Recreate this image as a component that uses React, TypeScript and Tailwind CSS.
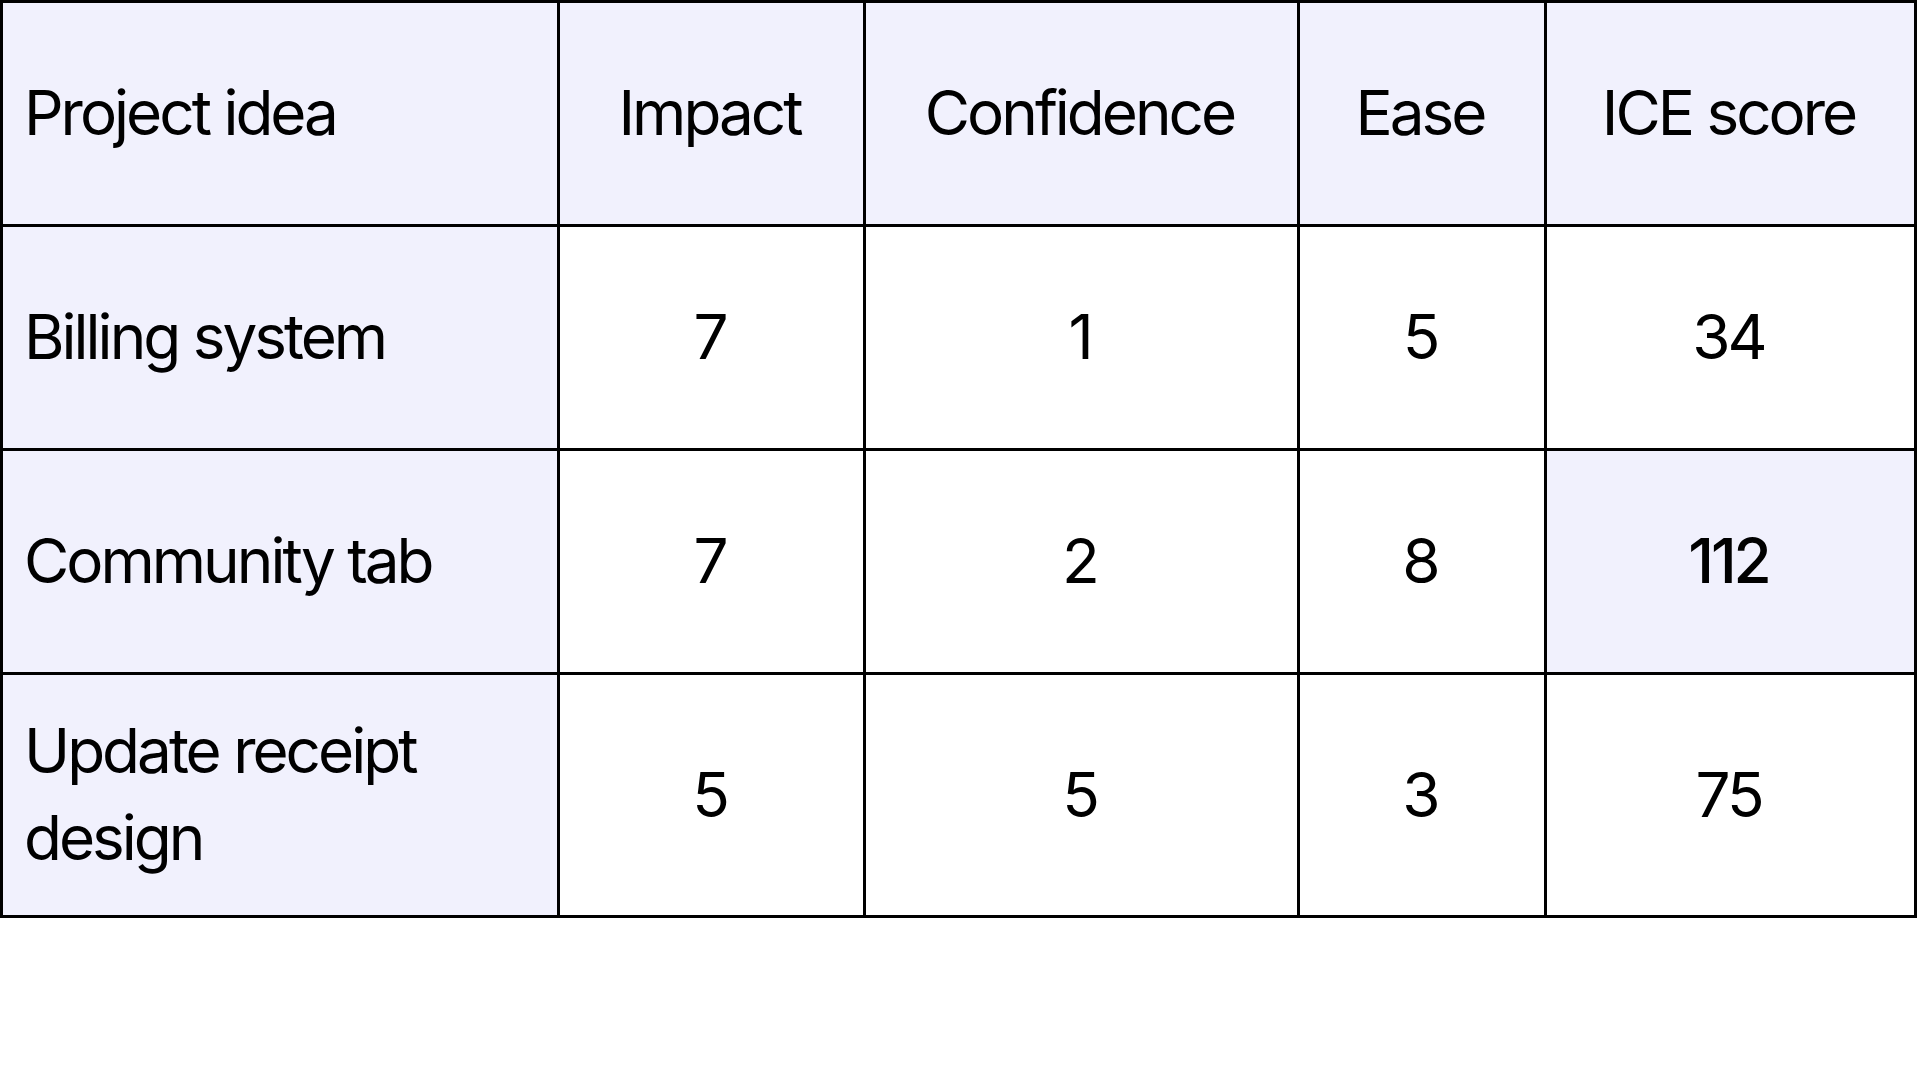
import React from "react";

const header = ["Project idea", "Impact", "Confidence", "Ease", "ICE score"];
const rows: { name: string; vals: string[]; hi?: boolean }[] = [
  { name: "Billing system", vals: ["7", "1", "5", "34"] },
  { name: "Community tab", vals: ["7", "2", "8", "112"], hi: true },
  { name: "Update receipt design", vals: ["5", "5", "3", "75"] },
];

export default function App() {
  return (
    <div className="w-[1920px] h-[1080px] bg-white text-black" style={{ fontFamily: "Inter, 'Noto Sans', sans-serif" }}>
      <div className="grid w-[1917px] bg-black gap-[3px] p-[3px] grid-cols-[554px_303px_431px_244px_367px] grid-rows-[221px_221px_221px_240px] text-[62px] leading-[1.4] tracking-[-3px]">
        {header.map((h, i) => (
          <div
            key={h}
            className={`bg-[#f1f1fd] flex items-center ${i === 0 ? "justify-start pl-[21px]" : "justify-center pr-[4px]"}`}
          >
            {h}
          </div>
        ))}
        {rows.map((r) => (
          <React.Fragment key={r.name}>
            <div className="bg-[#f1f1fd] flex items-center pl-[21px] pr-[25px]">{r.name}</div>
            {r.vals.map((v, j) => (
              <div
                key={j}
                className={`flex items-center justify-center pr-[4px] ${r.hi && j === 3 ? "bg-[#f1f1fd] font-medium" : "bg-white"}`}
              >
                {v}
              </div>
            ))}
          </React.Fragment>
        ))}
      </div>
    </div>
  );
}
